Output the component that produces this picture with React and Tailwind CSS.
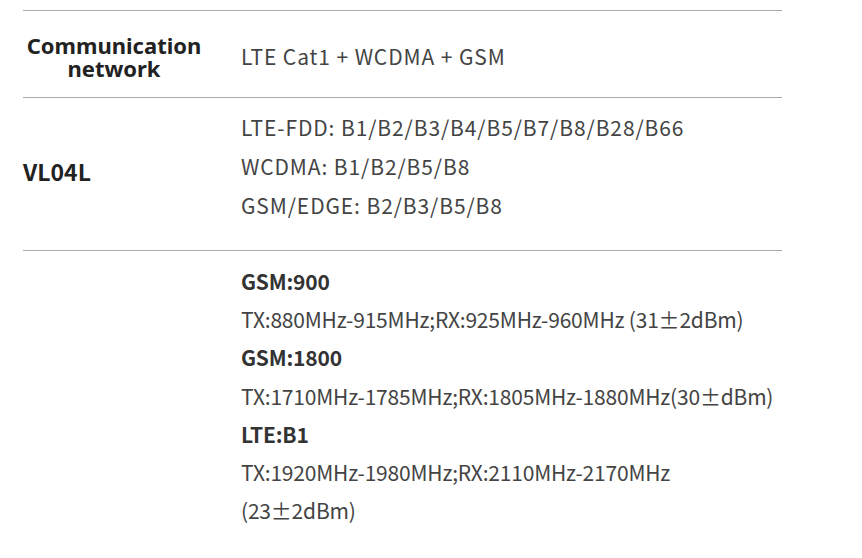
import React from 'react';

const bands = [
  { title: 'GSM:900', value: 'TX:880MHz-915MHz;RX:925MHz-960MHz (31±2dBm)' },
  { title: 'GSM:1800', value: 'TX:1710MHz-1785MHz;RX:1805MHz-1880MHz(30±dBm)' },
  { title: 'LTE:B1', value: 'TX:1920MHz-1980MHz;RX:2110MHz-2170MHz (23±2dBm)' },
];

const App = () => {
  return (
    <div className="min-h-screen bg-white pt-[10px] pl-[23px]" style={{ fontFamily: '"Noto Sans CJK SC", "Noto Sans", sans-serif' }}>
      <div className="w-[759px] text-[#444]">
        {/* communication network */}
        <div className="flex border-t border-[#aaa] h-[87px] items-center pt-[6px]">
          <div className="w-[182px] mr-[36px] text-center font-bold text-[22px] leading-[23px] text-[#222]" style={{ fontFamily: '"Noto Sans", sans-serif' }}>
            Communication<br />network
          </div>
          <div className="text-[21px] tracking-[0.9px]">LTE Cat1 + WCDMA + GSM</div>
        </div>

        {/* bands */}
        <div className="flex border-t border-[#aaa] h-[153px] items-center">
          <div className="w-[218px] font-bold text-[23px] text-[#222] pb-[6px]">VL04L</div>
          <div className="text-[21px] leading-[39px] tracking-[0.9px] pt-[10px] pb-[26px]">
            <div>LTE-FDD: B1/B2/B3/B4/B5/B7/B8/B28/B66</div>
            <div>WCDMA: B1/B2/B5/B8</div>
            <div>GSM/EDGE: B2/B3/B5/B8</div>
          </div>
        </div>

        {/* power */}
        <div className="flex border-t border-[#aaa]">
          <div className="w-[218px]" />
          <div className="flex-1 text-[21px] leading-[38.2px] pt-[11px] tracking-[-0.2px]">
            {bands.map((b) => (
              <div key={b.title}>
                <div className="font-bold text-[#333]">{b.title}</div>
                <div>{b.value}</div>
              </div>
            ))}
          </div>
        </div>
      </div>
    </div>
  );
};

export default App;
